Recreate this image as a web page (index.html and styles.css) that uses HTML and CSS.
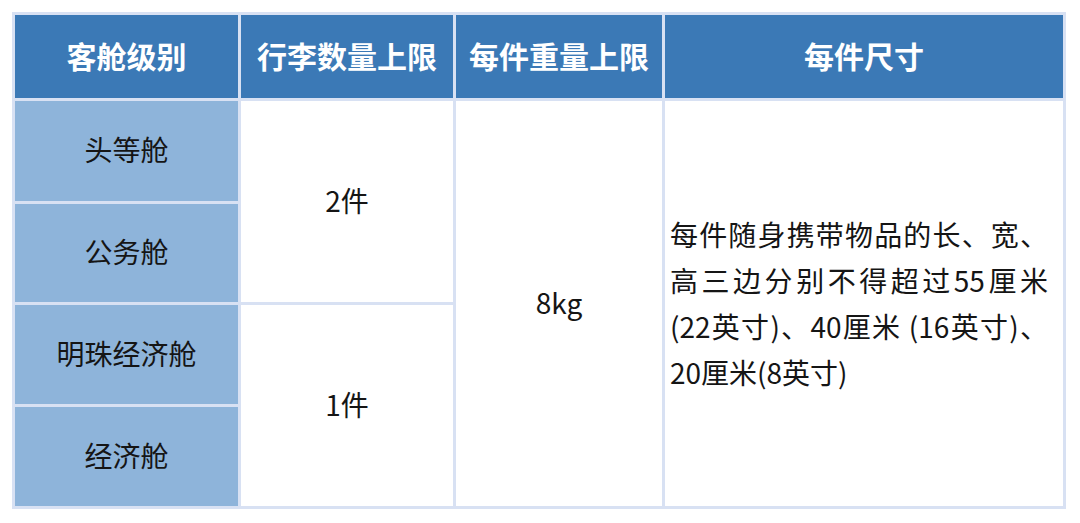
FILE: index.html
```html
<!DOCTYPE html>
<html lang="zh-CN">
<head>
<meta charset="utf-8">
<link rel="stylesheet" href="styles.css">
</head>
<body>
<div class="page">
  <div class="table">
    <div class="cell head">客舱级别</div>
    <div class="cell head">行李数量上限</div>
    <div class="cell head">每件重量上限</div>
    <div class="cell head">每件尺寸</div>

    <div class="cell cls r2">头等舱</div>
    <div class="cell qty r2span">2件</div>
    <div class="cell weight r2all">8kg</div>
    <div class="cell size r2all">
      <div class="sizetext">
        <span class="ln j">每件随身携带物品的长、宽、</span>
        <span class="ln j">高三边分别不得超过55厘米</span>
        <span class="ln j">(22英寸)、40厘米 (16英寸)、</span>
        <span class="ln">20厘米(8英寸)</span>
      </div>
    </div>

    <div class="cell cls r3">公务舱</div>
    <div class="cell cls r4">明珠经济舱</div>
    <div class="cell qty r4span">1件</div>
    <div class="cell cls r5">经济舱</div>
  </div>
</div>
</body>
</html>
```

FILE: styles.css
```css
html, body {
  margin: 0;
  padding: 0;
  background: #ffffff;
}

.page {
  padding: 12px 0 0 12px;
  font-family: "Noto Sans CJK SC", "Noto Sans", sans-serif;
}

.table {
  display: grid;
  grid-template-columns: 223px 212px 206px 398px;
  grid-template-rows: 83px 100px 98px 99px 99px;
  gap: 3px;
  padding: 3px;
  width: max-content;
  background: #d8e1f3;
}

.cell {
  display: flex;
  align-items: center;
  justify-content: center;
  padding-bottom: 4px;
  background: #ffffff;
  color: #151515;
  font-size: 28px;
}

.head {
  background: #3b79b6;
  color: #ffffff;
  font-size: 30px;
  font-weight: 700;
}

.cls {
  background: #8eb4da;
  grid-column: 1;
}

.r2 { grid-row: 2; }
.r3 { grid-row: 3; }
.r4 { grid-row: 4; }
.r5 { grid-row: 5; }

.qty { grid-column: 2; }
.r2span { grid-row: 2 / 4; }
.r4span { grid-row: 4 / 6; }

.weight {
  grid-column: 3;
  grid-row: 2 / 6;
}

.size {
  grid-column: 4;
  grid-row: 2 / 6;
  justify-content: flex-start;
  padding: 0 14px 2px 5px;
}

.sizetext {
  width: 378px;
  line-height: 46px;
  font-size: 28px;
}

.ln {
  display: block;
  text-align: left;
  white-space: nowrap;
}

.ln.j {
  text-align: justify;
  text-align-last: justify;
  white-space: normal;
}
```
